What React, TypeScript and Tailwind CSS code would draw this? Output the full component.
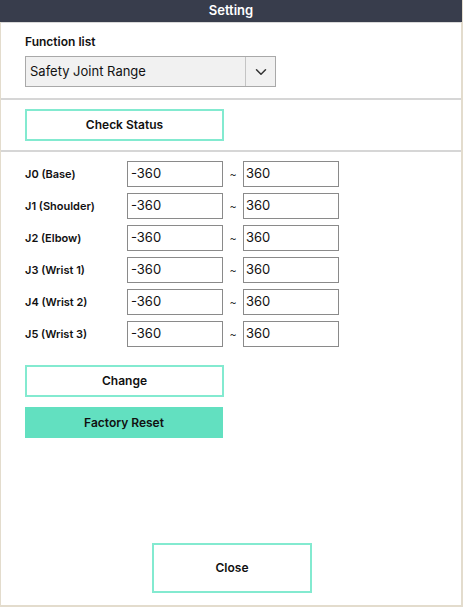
import { ChevronDown } from "lucide-react";

const joints = [
  { name: "J0 (Base)", min: "-360", max: "360" },
  { name: "J1 (Shoulder)", min: "-360", max: "360" },
  { name: "J2 (Elbow)", min: "-360", max: "360" },
  { name: "J3 (Wrist 1)", min: "-360", max: "360" },
  { name: "J4 (Wrist 2)", min: "-360", max: "360" },
  { name: "J5 (Wrist 3)", min: "-360", max: "360" }
];

export default function App() {
  return (
    <div className="flex h-[607px] w-[463px] flex-col border-b-2 border-l border-r-2 border-[#e3dccd] bg-white font-['Inter',sans-serif] text-[#111]">
      <div className="-mx-[1px] flex h-[22px] shrink-0 items-center justify-center bg-[#383d4c] text-[13px] font-semibold text-white">
        Setting
      </div>
      <div className="h-px bg-[#d9d9d9]" />
      <div className="px-6 pb-[11px] pt-[11px]">
        <p className="text-[12px] font-semibold leading-4">Function list</p>
        <div className="mt-[6px] flex h-[31px] w-[251px] border border-[#a9a9a9] bg-[#f1f1f1]">
          <span className="flex flex-1 items-center pl-1 text-[13px]">Safety Joint Range</span>
          <span className="flex w-[30px] items-center justify-center border-l border-[#c4c4c4]">
            <ChevronDown className="size-[18px] text-[#333]" strokeWidth={2} />
          </span>
        </div>
      </div>
      <div className="h-[2px] bg-[#d6d6d6]" />
      <div className="px-6 py-[9px]">
        <button className="flex h-[32px] w-[199px] items-center justify-center border-2 border-[#83ead0] text-[12px] font-semibold">
          Check Status
        </button>
      </div>
      <div className="h-[2px] bg-[#d6d6d6]" />
      <div className="flex flex-col gap-[6px] px-6 pt-[9px]">
        {joints.map((j) => (
          <div key={j.name} className="flex h-[26px] items-center">
            <span className="w-[102px] text-[11px] font-semibold">{j.name}</span>
            <span className="flex h-full w-[96px] items-center border border-[#8a8a8a] pl-[3px] text-[13px]">{j.min}</span>
            <span className="w-[20px] text-center text-[11px] font-light">~</span>
            <span className="flex h-full w-[96px] items-center border border-[#8a8a8a] pl-[2px] text-[13px]">{j.max}</span>
          </div>
        ))}
      </div>
      <div className="flex flex-col gap-[10px] px-6 pt-[18px]">
        <button className="flex h-[32px] w-[199px] items-center justify-center border-2 border-[#83ead0] text-[12px] font-semibold">
          Change
        </button>
        <button className="flex h-[31px] w-[198px] items-center justify-center bg-[#62e0c0] text-[12px] font-semibold">
          Factory Reset
        </button>
      </div>
      <div className="mt-auto flex justify-center pb-[12px]">
        <button className="ml-[2px] flex h-[50px] w-[160px] items-center justify-center border-2 border-[#83ead0] text-[12px] font-semibold">
          Close
        </button>
      </div>
    </div>
  );
}
